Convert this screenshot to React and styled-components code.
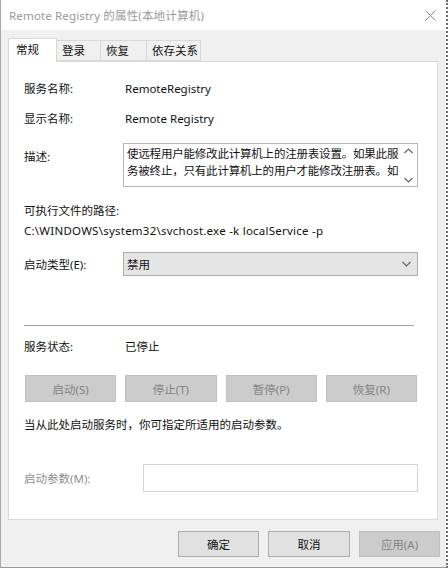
import React from 'react';
import styled, { createGlobalStyle } from 'styled-components';

const GlobalStyle = createGlobalStyle`
  html, body {
    margin: 0;
    padding: 0;
    background: #ffffff;
  }
  body {
    font-family: 'Noto Sans', 'Noto Sans CJK SC', sans-serif;
  }
`;

const FONT = `'Noto Sans', 'Noto Sans CJK SC', sans-serif`;

const Window = styled.div`
  width: 448px;
  height: 568px;
  box-sizing: border-box;
  display: flex;
  flex-direction: column;
  border-left: 1px solid #a8a8a8;
  border-right: 2px dotted #6a6a6a;
  border-bottom: 1px solid #9a9a9a;
  font-family: ${FONT};
  font-size: 11.5px;
  color: #111;
`;

const TitleBar = styled.div`
  height: 30px;
  flex: none;
  display: flex;
  align-items: center;
  justify-content: space-between;
  background: #ffffff;
  padding: 0 8px 0 8px;
`;

const Title = styled.span`
  color: #9a9a9a;
  font-size: 11.6px;
  letter-spacing: 0.1px;
`;

const CloseIcon = styled.svg`
  width: 11px;
  height: 11px;
  margin-right: 2px;
`;

const Body = styled.div`
  flex: 1;
  display: flex;
  flex-direction: column;
  background: #f0f0f0;
  padding: 8px 8px 0 7px;
`;

const TabStrip = styled.div`
  display: flex;
  align-items: flex-end;
  height: 23px;
  position: relative;
  z-index: 1;
`;

const Tab = styled.div`
  box-sizing: border-box;
  width: ${({ $w }) => $w}px;
  height: ${({ $active }) => ($active ? 24 : 21)}px;
  margin-bottom: ${({ $active }) => ($active ? -1 : 0)}px;
  padding-left: ${({ $active }) => ($active ? 7 : 5)}px;
  padding-top: ${({ $active }) => ($active ? 2 : 1)}px;
  background: ${({ $active }) => ($active ? '#ffffff' : '#f0f0f0')};
  border: 1px solid #d9d9d9;
  border-bottom: ${({ $active }) => ($active ? 'none' : '1px solid #d9d9d9')};
  border-left: ${({ $first }) => ($first ? '1px solid #d9d9d9' : 'none')};
  line-height: 17px;
  white-space: nowrap;
`;

const Panel = styled.div`
  height: 459px;
  box-sizing: border-box;
  background: #ffffff;
  border: 1px solid #d9d9d9;
  padding: 12px 19px 0 15px;
  display: flex;
  flex-direction: column;
`;

const InfoRow = styled.div`
  display: flex;
  align-items: center;
  height: 30px;
  line-height: 20px;
  margin-top: ${({ $mt }) => $mt || 0}px;
`;

const Label = styled.span`
  width: ${({ $w }) => $w || 101}px;
  flex: none;
  color: ${({ $disabled }) => ($disabled ? '#8f8f8f' : '#111')};
`;

const Value = styled.span`
  color: #111;
`;

const DescRow = styled.div`
  display: flex;
  margin-top: 9px;
`;

const DescLabel = styled.span`
  width: 99px;
  flex: none;
  padding-top: 5px;
  line-height: 18px;
`;

const DescBox = styled.div`
  flex: 1;
  height: 44px;
  box-sizing: border-box;
  border: 1px solid #b4b4b4;
  display: flex;
  overflow: hidden;
`;

const DescText = styled.div`
  flex: 1;
  min-width: 0;
  padding: 1px 0 0 3px;
  overflow: hidden;
`;

const DescLine = styled.div`
  line-height: 17px;
  white-space: nowrap;
  letter-spacing: -0.2px;
`;

const ScrollBar = styled.div`
  width: 17px;
  flex: none;
  display: flex;
  flex-direction: column;
  justify-content: space-between;
  align-items: center;
  padding: 4px 0 3px;
`;

const PathLabel = styled.div`
  margin-top: 14px;
  line-height: 20px;
`;

const PathText = styled.div`
  line-height: 20px;
  letter-spacing: 0.24px;
`;

const SelectRow = styled.div`
  display: flex;
  align-items: center;
  margin-top: 11px;
`;

const SelectBox = styled.div`
  flex: 1;
  height: 24px;
  box-sizing: border-box;
  background: #e5e5e5;
  border: 1px solid #adadad;
  display: flex;
  align-items: center;
  justify-content: space-between;
  padding: 0 6px 0 3px;
`;

const Separator = styled.div`
  margin-top: 49px;
  margin-right: 4px;
  height: 1px;
  background: #a0a0a0;
`;

const ButtonGrid = styled.div`
  display: grid;
  grid-template-columns: repeat(4, 1fr);
  column-gap: 9px;
  margin: 13px 1px 0 1px;
`;

const Button = styled.div`
  height: ${({ $h }) => $h || 27}px;
  width: ${({ $w }) => ($w ? `${$w}px` : 'auto')};
  box-sizing: border-box;
  display: flex;
  align-items: center;
  justify-content: center;
  background: ${({ $disabled }) => ($disabled ? '#cccccc' : '#e1e1e1')};
  border: 1px solid ${({ $disabled }) => ($disabled ? '#bfbfbf' : '#adadad')};
  color: ${({ $disabled }) => ($disabled ? '#838383' : '#111')};
`;

const Hint = styled.div`
  margin-top: 13px;
  line-height: 20px;
`;

const ParamRow = styled.div`
  display: flex;
  align-items: center;
  margin-top: 29px;
`;

const ParamInput = styled.div`
  flex: 1;
  height: 28px;
  box-sizing: border-box;
  background: #ffffff;
  border: 1px solid #d4d4d4;
`;

const Footer = styled.div`
  display: flex;
  justify-content: flex-end;
  gap: 9px;
  margin: 11px -2px 0 0;
`;

function Chevron({ up }) {
  return (
    <svg width="9" height="6" viewBox="0 0 9 6">
      <path
        d={up ? 'M0.5 5 L4.5 1 L8.5 5' : 'M0.5 1 L4.5 5 L8.5 1'}
        fill="none"
        stroke="#606060"
        strokeWidth="1.1"
      />
    </svg>
  );
}

export default function App() {
  return (
    <>
      <GlobalStyle />
      <Window>
        <TitleBar>
          <Title>Remote Registry 的属性(本地计算机)</Title>
          <CloseIcon viewBox="0 0 11 11">
            <path d="M0.5 0.5 L10.5 10.5 M10.5 0.5 L0.5 10.5" stroke="#8a8a8a" strokeWidth="1" />
          </CloseIcon>
        </TitleBar>
        <Body>
          <TabStrip>
            <Tab $active $first $w={49}>常规</Tab>
            <Tab $w={44}>登录</Tab>
            <Tab $w={46}>恢复</Tab>
            <Tab $w={54}>依存关系</Tab>
          </TabStrip>
          <Panel>
            <InfoRow>
              <Label>服务名称:</Label>
              <Value>RemoteRegistry</Value>
            </InfoRow>
            <InfoRow>
              <Label>显示名称:</Label>
              <Value>Remote Registry</Value>
            </InfoRow>
            <DescRow>
              <DescLabel>描述:</DescLabel>
              <DescBox>
                <DescText>
                  <DescLine>使远程用户能修改此计算机上的注册表设置。如果此服</DescLine>
                  <DescLine>务被终止，只有此计算机上的用户才能修改注册表。如</DescLine>
                </DescText>
                <ScrollBar>
                  <Chevron up />
                  <Chevron />
                </ScrollBar>
              </DescBox>
            </DescRow>
            <PathLabel>可执行文件的路径:</PathLabel>
            <PathText>C:\WINDOWS\system32\svchost.exe -k localService -p</PathText>
            <SelectRow>
              <Label $w={99}>启动类型(E):</Label>
              <SelectBox>
                <span>禁用</span>
                <Chevron />
              </SelectBox>
            </SelectRow>
            <Separator />
            <InfoRow $mt={6}>
              <Label>服务状态:</Label>
              <Value>已停止</Value>
            </InfoRow>
            <ButtonGrid>
              <Button $disabled>启动(S)</Button>
              <Button $disabled>停止(T)</Button>
              <Button $disabled>暂停(P)</Button>
              <Button $disabled>恢复(R)</Button>
            </ButtonGrid>
            <Hint>当从此处启动服务时，你可指定所适用的启动参数。</Hint>
            <ParamRow>
              <Label $w={119} $disabled>启动参数(M):</Label>
              <ParamInput />
            </ParamRow>
          </Panel>
          <Footer>
            <Button $w={81} $h={26}>确定</Button>
            <Button $w={82} $h={26}>取消</Button>
            <Button $w={81} $h={26} $disabled>应用(A)</Button>
          </Footer>
        </Body>
      </Window>
    </>
  );
}
